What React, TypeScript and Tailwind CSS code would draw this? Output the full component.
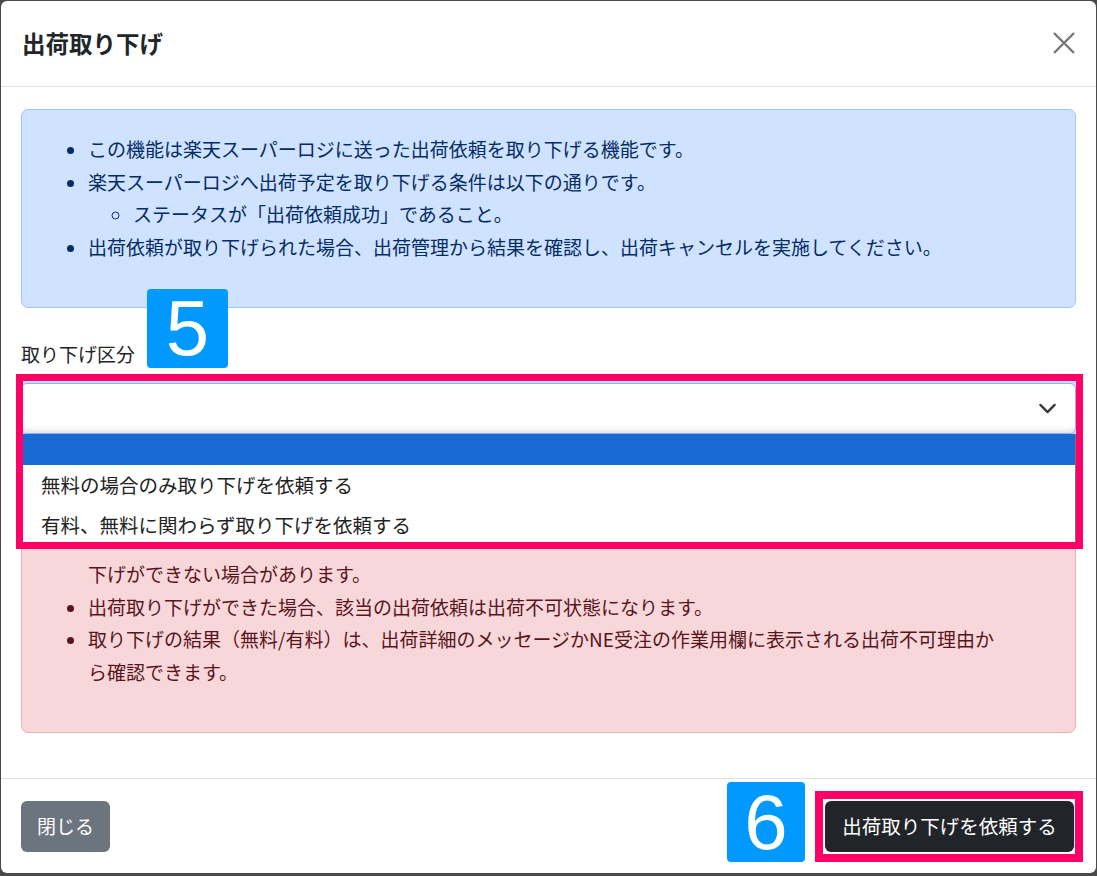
import React from "react";

// 番号付きの注釈バッジ
const Badge: React.FC<{ n: string; className: string }> = ({ n, className }) => (
  <div
    className={`absolute z-30 flex items-center justify-center rounded-[4px] bg-[#0099ff] font-['Liberation_Sans',Arial,sans-serif] text-[78px] leading-none text-white ${className}`}
  >
    {n}
  </div>
);

const App: React.FC = () => {
  return (
    <div className="h-[876px] w-[1097px] bg-[#4a4a4a] pl-px pt-px font-['Noto_Sans_CJK_JP','Noto_Sans',sans-serif] text-[#212529]">
      <div className="flex h-[872px] w-[1095px] flex-col overflow-hidden rounded-[6px] bg-white">
        {/* ヘッダー */}
        <div className="flex h-[86px] shrink-0 items-center justify-between border-b border-[#dee2e6] pl-[21px] pr-[21px]">
          <h1 className="text-[23.5px] font-bold leading-none">出荷取り下げ</h1>
          <svg width="22" height="22" viewBox="0 0 22 22" className="mt-[-2px]">
            <path d="M1 1 21 21M21 1 1 21" stroke="#777" strokeWidth="2.4" fill="none" />
          </svg>
        </div>

        {/* 本文 */}
        <div className="relative flex-1 px-[20px] pt-[22px]">
          <div className="rounded-[7px] border border-[#9ec5fe] bg-[#cfe2ff] px-[19px] pb-[43px] pt-[23px] text-[19px] leading-[32.7px] text-[#052c65]">
            <ul className="list-disc pl-[47px]">
              <li>この機能は楽天スーパーロジに送った出荷依頼を取り下げる機能です。</li>
              <li>
                楽天スーパーロジへ出荷予定を取り下げる条件は以下の通りです。
                <ul className="list-[circle] pl-[45px]">
                  <li>ステータスが「出荷依頼成功」であること。</li>
                </ul>
              </li>
              <li>出荷依頼が取り下げられた場合、出荷管理から結果を確認し、出荷キャンセルを実施してください。</li>
            </ul>
          </div>

          <div className="relative mb-[12px] mt-[30px] text-[19px] leading-[32.7px]">
            取り下げ区分
            <Badge n="5" className="left-[126px] top-[-49px] h-[79px] w-[81px]" />
          </div>

          <div className="relative h-[51px]">
            <div className="flex h-[51px] items-center justify-end rounded-[6px] border border-[#86b7fe] bg-white pr-[18px] shadow-[0_0_0_4px_rgba(13,110,253,0.25),inset_0_-6px_6px_-4px_rgba(0,0,0,0.15)]">
              <svg width="19" height="19" viewBox="0 0 16 16">
                <path d="m2 5 6 6 6-6" stroke="#343a40" strokeWidth="2" strokeLinecap="round" strokeLinejoin="round" fill="none" />
              </svg>
            </div>

            {/* 開いたドロップダウン */}
            <div className="absolute left-0 right-0 top-[51px] z-10 border border-t-0 border-[#767676] bg-white text-[19.5px] text-[#222]">
              <div className="h-[31px] bg-[#1a69d2]" />
              <div className="flex h-[40px] items-center pl-[19px]">無料の場合のみ取り下げを依頼する</div>
              <div className="flex h-[40px] items-center pl-[19px]">有料、無料に関わらず取り下げを依頼する</div>
            </div>

            <div className="pointer-events-none absolute left-[-5px] top-[-9px] z-20 h-[175px] w-[1067px] border-[7px] border-[#ff0066]" />
          </div>

          {/* 先頭の行はドロップダウンに隠れている */}
          <div className="mt-[35px] rounded-[7px] border border-[#f1aeb5] bg-[#f8d7da] px-[19px] pb-[43px] pt-[23px] text-[19px] leading-[32.7px] text-[#58151c]">
            <ul className="list-disc pl-[47px]">
              <li className="invisible">楽天スーパーロジの作業状況により、取り下げに時間がかかる場合があります。</li>
              <li className="marker:text-transparent">
                <span className="invisible">楽天スーパーロジで出荷作業が開始されている場合は、取り</span>
                <br />
                下げができない場合があります。
              </li>
              <li>出荷取り下げができた場合、該当の出荷依頼は出荷不可状態になります。</li>
              <li>
                取り下げの結果（無料/有料）は、出荷詳細のメッセージかNE受注の作業用欄に表示される出荷不可理由か
                <br />
                ら確認できます。
              </li>
            </ul>
          </div>
        </div>

        {/* フッター */}
        <div className="flex h-[95px] shrink-0 items-center justify-between border-t border-[#dee2e6] pl-[20px] pr-[22px]">
          <button className="h-[51px] w-[89px] rounded-[6px] bg-[#6c757d] text-[19px] text-white">閉じる</button>
          <div className="relative">
            <Badge n="6" className="left-[-98px] top-[-19px] h-[80px] w-[78px]" />
            <button className="h-[51px] w-[249px] rounded-[6px] bg-[#212529] text-[19.5px] text-white">
              出荷取り下げを依頼する
            </button>
            <div className="pointer-events-none absolute bottom-[-10px] left-[-10px] right-[-9px] top-[-10px] border-[8px] border-[#ff0066]" />
          </div>
        </div>
      </div>
    </div>
  );
};

export default App;
